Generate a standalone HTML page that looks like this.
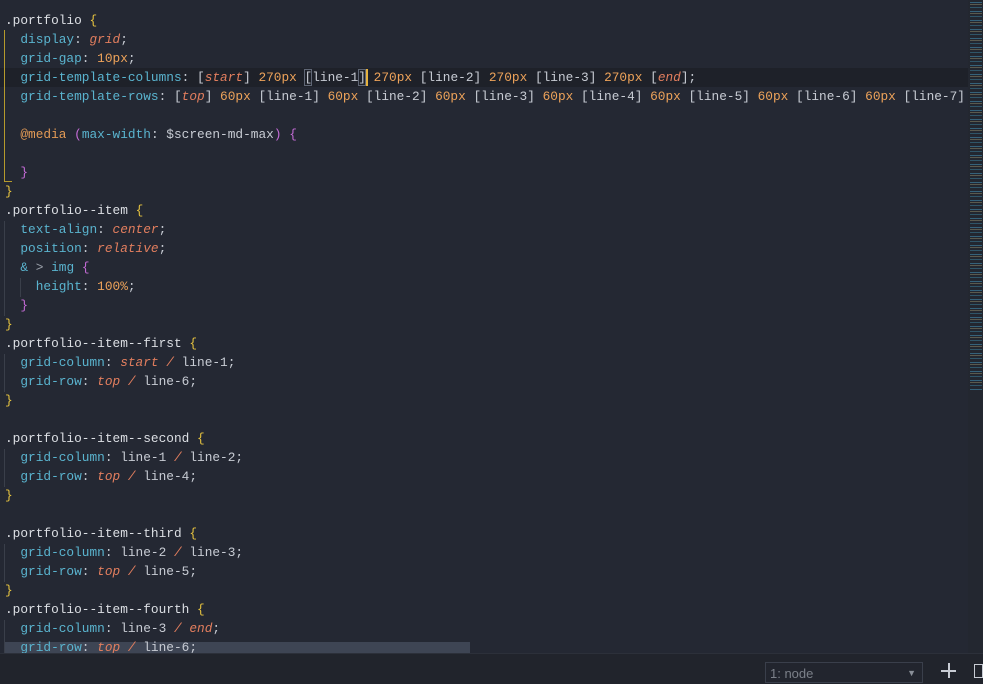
<!DOCTYPE html>
<html><head><meta charset="utf-8"><style>
html,body{margin:0;padding:0;width:983px;height:683px;overflow:hidden;background:#22252e;}
#ed{position:absolute;left:0;top:0;width:983px;height:653px;overflow:hidden;background:#242833;}
#code{position:absolute;left:5px;top:11px;margin:0;font-family:"Liberation Mono",monospace;font-size:12.8px;line-height:19px;color:#c8ccd4;white-space:pre;}
.s{color:#dcdfe4}.p{color:#5ab4cf}.v{color:#e27e5e;font-style:italic}.n{color:#eea35a}.b{color:#e6c33f}.at{color:#e29a55}.m{color:#c46bd6}.g{color:#9aa0aa}
#cur{position:absolute;left:0;top:68px;width:968px;height:19px;background:#1e2129;}
#sel{position:absolute;left:4px;top:642px;width:466px;height:19px;background:#3e4554;}
.guide{position:absolute;left:4px;width:1px;background:#3a3f4a;}
#mm{position:absolute;left:968px;top:0;width:15px;height:653px;background:#232730;}
.mb{position:absolute;height:1px;}
#panel{position:absolute;left:0;top:653px;width:983px;height:30px;background:#21242c;border-top:1px solid #2c303a;}
#drop{position:absolute;left:765px;top:8px;width:158px;height:21px;border:1px solid #3a3f4b;background:#22252e;color:#7b8089;font-family:"Liberation Sans",sans-serif;font-size:13px;line-height:21px;box-sizing:border-box;padding-left:4px;}
</style></head><body>
<div id="ed">
<div id="cur"></div>
<div id="sel"></div>
<div style="position:absolute;left:4px;top:30px;width:1px;height:152px;background:#b59a2c"></div>
<div style="position:absolute;left:4px;top:181px;width:8px;height:1px;background:#b59a2c"></div>
<div class="guide" style="top:221px;height:95px"></div>
<div class="guide" style="left:20px;top:278px;height:19px"></div>
<div class="guide" style="top:354px;height:38px"></div>
<div class="guide" style="top:449px;height:38px"></div>
<div class="guide" style="top:544px;height:38px"></div>
<div class="guide" style="top:620px;height:38px"></div>
<div style="position:absolute;left:304px;top:69px;width:8px;height:17px;border:1px solid #5f6675;box-sizing:border-box"></div>
<div style="position:absolute;left:358px;top:69px;width:8px;height:17px;border:1px solid #5f6675;box-sizing:border-box"></div>
<div style="position:absolute;left:366px;top:69px;width:2px;height:17px;background:#e6b33f"></div>
<pre id="code"><span class="s">.portfolio</span> <span class="b">{</span>
  <span class="p">display</span>: <span class="v">grid</span>;
  <span class="p">grid-gap</span>: <span class="n">10px</span>;
  <span class="p">grid-template-columns</span>: [<span class="v">start</span>] <span class="n">270px</span> [line-1] <span class="n">270px</span> [line-2] <span class="n">270px</span> [line-3] <span class="n">270px</span> [<span class="v">end</span>];
  <span class="p">grid-template-rows</span>: [<span class="v">top</span>] <span class="n">60px</span> [line-1] <span class="n">60px</span> [line-2] <span class="n">60px</span> [line-3] <span class="n">60px</span> [line-4] <span class="n">60px</span> [line-5] <span class="n">60px</span> [line-6] <span class="n">60px</span> [line-7]

  <span class="at">@media</span> <span class="m">(</span><span class="p">max-width</span>: $screen-md-max<span class="m">)</span> <span class="m">{</span>

  <span class="m">}</span>
<span class="b">}</span>
<span class="s">.portfolio--item</span> <span class="b">{</span>
  <span class="p">text-align</span>: <span class="v">center</span>;
  <span class="p">position</span>: <span class="v">relative</span>;
  <span class="p">&amp;</span> <span class="g">&gt;</span> <span class="p">img</span> <span class="m">{</span>
    <span class="p">height</span>: <span class="n">100%</span>;
  <span class="m">}</span>
<span class="b">}</span>
<span class="s">.portfolio--item--first</span> <span class="b">{</span>
  <span class="p">grid-column</span>: <span class="v">start</span> <span class="v">/</span> line-1;
  <span class="p">grid-row</span>: <span class="v">top</span> <span class="v">/</span> line-6;
<span class="b">}</span>

<span class="s">.portfolio--item--second</span> <span class="b">{</span>
  <span class="p">grid-column</span>: line-1 <span class="v">/</span> line-2;
  <span class="p">grid-row</span>: <span class="v">top</span> <span class="v">/</span> line-4;
<span class="b">}</span>

<span class="s">.portfolio--item--third</span> <span class="b">{</span>
  <span class="p">grid-column</span>: line-2 <span class="v">/</span> line-3;
  <span class="p">grid-row</span>: <span class="v">top</span> <span class="v">/</span> line-5;
<span class="b">}</span>
<span class="s">.portfolio--item--fourth</span> <span class="b">{</span>
  <span class="p">grid-column</span>: line-3 <span class="v">/</span> <span class="v">end</span>;
  <span class="p">grid-row</span>: <span class="v">top</span> <span class="v">/</span> line-6;</pre>
<div id="mm">
<div style="position:absolute;left:2px;top:2px;width:12px;height:388px;background:repeating-linear-gradient(#35627a 0 1px,transparent 1px 2px,#5a5a4e 2px 3px,transparent 3px 5px,#2f5568 5px 6px,transparent 6px 9px)"></div>
</div>
</div>
<div id="panel">
<div id="drop">1: node<span style="position:absolute;right:6px;top:0;font-size:9px;color:#8a8f98">▼</span></div>
<div style="position:absolute;left:941px;top:16px;width:15px;height:2px;background:#c8ccd4"></div>
<div style="position:absolute;left:948px;top:9px;width:2px;height:15px;background:#c8ccd4"></div>
<div style="position:absolute;left:974px;top:10px;width:9px;height:14px;border:1px solid #c8ccd4;box-sizing:border-box"></div>
</div>
</body></html>
